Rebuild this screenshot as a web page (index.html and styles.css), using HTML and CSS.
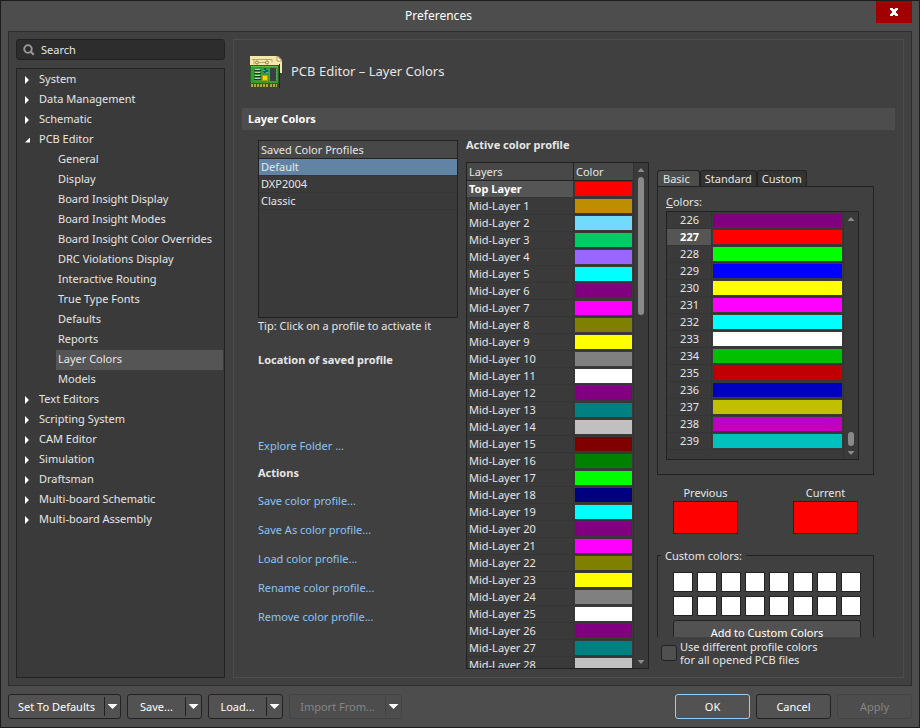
FILE: index.html
```
<!DOCTYPE html>
<html lang="en">
<head>
    <meta charset="UTF-8">
    <meta name="viewport" content="width=device-width, initial-scale=1.0">
    <title>Preferences</title>
    <link rel="stylesheet" href="styles.css">
</head>
<body>
    <div class="dialog">
        <header class="titlebar">
            <h1>Preferences</h1>
            <button type="button" class="close" aria-label="Close">
                <svg width="8" height="8" viewBox="0 0 8 8"><path d="M0 0h3v1h2V0h3v2H7v1H6v2h1v1h1v2H5V7H3v1H0V6h1V5h1V3H1V2H0z" fill="#fff"/></svg>
            </button>
        </header>

        <main class="main">
            <aside class="sidebar">
                <div class="search">
                    <svg width="12" height="12" viewBox="0 0 12 12"><circle cx="5" cy="5" r="3.8" fill="none" stroke="#999" stroke-width="1.8"/><path d="M7.8 7.8l3 3" stroke="#999" stroke-width="2"/></svg>
                    <input type="text" placeholder="Search" aria-label="Search">
                </div>
                <nav class="tree">
                    <ul>
                        <li><a href="#" class="closed">System</a></li>
                        <li><a href="#" class="closed">Data Management</a></li>
                        <li><a href="#" class="closed">Schematic</a></li>
                        <li><a href="#" class="open">PCB Editor</a>
                            <ul>
                                <li><a href="#">General</a></li>
                                <li><a href="#">Display</a></li>
                                <li><a href="#">Board Insight Display</a></li>
                                <li><a href="#">Board Insight Modes</a></li>
                                <li><a href="#">Board Insight Color Overrides</a></li>
                                <li><a href="#">DRC Violations Display</a></li>
                                <li><a href="#">Interactive Routing</a></li>
                                <li><a href="#">True Type Fonts</a></li>
                                <li><a href="#">Defaults</a></li>
                                <li><a href="#">Reports</a></li>
                                <li><a href="#" class="selected">Layer Colors</a></li>
                                <li><a href="#">Models</a></li>
                            </ul>
                        </li>
                        <li><a href="#" class="closed">Text Editors</a></li>
                        <li><a href="#" class="closed">Scripting System</a></li>
                        <li><a href="#" class="closed">CAM Editor</a></li>
                        <li><a href="#" class="closed">Simulation</a></li>
                        <li><a href="#" class="closed">Draftsman</a></li>
                        <li><a href="#" class="closed">Multi-board Schematic</a></li>
                        <li><a href="#" class="closed">Multi-board Assembly</a></li>
                    </ul>
                </nav>
            </aside>

            <section class="content">
                <div class="page-title">
                    <svg width="32" height="32" viewBox="0 0 32 32">
                        <path d="M0 0h28l4 4v13H0z" fill="#f5e6ac"/>
                        <path d="M27 0v5h5z" fill="#fffbe6" stroke="#b59b58"/>
                        <path d="M2 3.500h20v3M4 3.500v5M9 6.500h7" fill="none" stroke="#b9a468"/>
                        <circle cx="7" cy="6.500" r="1.500" fill="none" stroke="#8f7c42"/>
                        <circle cx="17" cy="6.500" r="1.500" fill="none" stroke="#8f7c42"/>
                        <path d="M0 9h30v19H0z" fill="#1d6a1d"/>
                        <path d="M1 10h27v17H1z" fill="#3a9a35"/>
                        <path d="M1 10.500h27" stroke="#62b94f"/>
                        <path d="M1 28h17v3H1zM20 28h7v3h-7z" fill="#9db32f"/>
                        <path d="M3.500 28v3M6.500 28v3M9.500 28v3M12.500 28v3M15.500 28v3M22.500 28v3M25.500 28v3" stroke="#3c5214"/>
                        <path d="M4 14.500h7M4 17.500h7M4 20.500h7M4 23.500h7" stroke="#123f1e"/>
                        <path d="M5 13.500h5M5 16.500h5M5 19.500h5M5 22.500h5" stroke="#b9d8bd"/>
                        <path d="M13 15h5M15 12v5" stroke="#135e5b" stroke-width="2"/>
                        <path d="M13 14.500h2M16 16.500h2" stroke="#45c3b0"/>
                        <path d="M12.500 19.500h5v5h-5z" fill="#f8d20c" stroke="#b89b10"/>
                        <path d="M20 12h6v13h-6z" fill="#3c3d45"/>
                        <path d="M19 14h1M19 17h1M19 20h1M19 23h1M26 14h1M26 17h1M26 20h1M26 23h1" stroke="#9da59d"/>
                        <path d="M29.500 8v24" stroke="#103710"/>
                    </svg>
                    <h2>PCB Editor – Layer Colors</h2>
                </div>
                <h3 class="section-bar">Layer Colors</h3>

                <div class="columns">
                    <div class="profiles">
                        <div class="profile-box">
                            <table>
                                <thead><tr><th>Saved Color Profiles</th></tr></thead>
                                <tbody>
                                    <tr class="active"><td>Default</td></tr>
                                    <tr><td>DXP2004</td></tr>
                                    <tr><td>Classic</td></tr>
                                </tbody>
                            </table>
                        </div>
                        <p class="tip">Tip: Click on a profile to activate it</p>
                        <h4>Location of saved profile</h4>
                        <a href="#" class="explore">Explore Folder ...</a>
                        <h4>Actions</h4>
                        <ul class="actions">
                            <li><a href="#">Save color profile...</a></li>
                            <li><a href="#">Save As color profile...</a></li>
                            <li><a href="#">Load color profile...</a></li>
                            <li><a href="#">Rename color profile...</a></li>
                            <li><a href="#">Remove color profile...</a></li>
                        </ul>
                    </div>

                    <div class="layers">
                        <h4>Active color profile</h4>
                        <div class="layer-box">
                            <div class="layer-scroll">
                                <table>
                                    <thead><tr><th>Layers</th><th>Color</th></tr></thead>
                                    <tbody id="layers"></tbody>
                                </table>
                            </div>
                            <div class="scrollbar"><i class="up"></i><i class="thumb"></i><i class="down"></i></div>
                        </div>
                    </div>

                    <div class="picker">
                        <div class="picker-view">
                            <div class="tabs" role="tablist">
                                <button type="button" role="tab" class="tab current" aria-selected="true">Basic</button>
                                <button type="button" role="tab" class="tab">Standard</button>
                                <button type="button" role="tab" class="tab">Custom</button>
                            </div>
                            <div class="tab-panel">
                                <p class="colors-label"><u>C</u>olors:</p>
                                <div class="color-box">
                                    <table>
                                        <tbody id="colors"></tbody>
                                    </table>
                                    <div class="scrollbar"><i class="up"></i><i class="thumb"></i><i class="down"></i></div>
                                </div>
                            </div>
                            <div class="compare">
                                <div>Previous<span class="sample"></span></div>
                                <div>Current<span class="sample"></span></div>
                            </div>
                            <fieldset>
                                <legend>Custom colors:</legend>
                                <div class="custom-grid" id="custom"></div>
                                <button type="button" class="btn add">Add to Custom Colors</button>
                            </fieldset>
                        </div>
                        <label class="check">
                            <input type="checkbox">
                            <span>Use different profile colors<br>for all opened PCB files</span>
                        </label>
                    </div>
                </div>
            </section>
        </main>

        <footer class="footer">
            <div class="split wide"><button type="button">Set To Defaults</button><button type="button" class="drop" aria-label="More defaults"></button></div>
            <div class="split"><button type="button">Save...</button><button type="button" class="drop" aria-label="More save options"></button></div>
            <div class="split"><button type="button">Load...</button><button type="button" class="drop" aria-label="More load options"></button></div>
            <div class="split wide off"><button type="button" disabled>Import From...</button><button type="button" class="drop" aria-label="More import options"></button></div>
            <span class="spacer"></span>
            <button type="button" class="btn primary">OK</button>
            <button type="button" class="btn">Cancel</button>
            <button type="button" class="btn" disabled>Apply</button>
        </footer>
    </div>
    <script src="script.js"></script>
</body>
</html>
```
FILE: styles.css
```
* {
    box-sizing: border-box;
}
body {
    margin: 0;
    font: 11px/17px "Noto Sans", "Open Sans", sans-serif;
    color: #e6e6e6;
    background: #4d4d4d;
}
h1, h2, h3, h4, p, ul {
    margin: 0;
    padding: 0;
}
ul {
    list-style: none;
}
button, input {
    font: inherit;
    color: inherit;
}
button {
    padding: 0;
}
table {
    border-spacing: 0;
    table-layout: fixed;
    width: 100%;
}
th, td {
    padding: 0 2px;
    line-height: 16px;
    text-align: left;
    font-weight: normal;
    white-space: nowrap;
}
th {
    height: 18px;
    border-bottom: 1px solid #222;
    background: #484848;
}
td {
    height: 17px;
    border-bottom: 1px solid #353535;
}
.dialog {
    display: flex;
    flex-direction: column;
    height: 100vh;
    border: 1px solid #1c1c1c;
    background: #4d4d4d;
}
.titlebar {
    display: grid;
    grid-template-columns: 1fr 36px;
    flex: 0 0 30px;
    padding-right: 7px;
    text-align: center;
}
.titlebar h1 {
    font-size: 12px;
    line-height: 29px;
    font-weight: normal;
    color: #fff;
}
.close {
    display: flex;
    align-items: center;
    justify-content: center;
    height: 22px;
    border: 0;
    background: #a00000;
}
.main {
    display: grid;
    grid-template-columns: 209px 1fr;
    grid-template-rows: minmax(0, 1fr);
    gap: 8px;
    flex: 1;
    min-height: 0;
    margin: 0 7px;
    padding: 7px;
    border: 1px solid #2e2e2e;
    background: #404040;
}

/* sidebar */
.sidebar {
    display: flex;
    flex-direction: column;
    gap: 8px;
}
.search {
    display: flex;
    align-items: center;
    gap: 6px;
    height: 21px;
    padding: 0 6px;
    border: 1px solid #222;
    border-radius: 3px;
    background: #2d2d2d;
}
.search input {
    flex: 1;
    min-width: 0;
    height: 17px;
    padding: 0 0 1px;
    border: 0;
    outline: 0;
    background: none;
}
.search input::placeholder {
    color: #e6e6e6;
}
.tree {
    flex: 1;
    padding: 1px;
    border: 1px solid #222;
    background: #3a3a3a;
}
.tree a {
    display: flex;
    align-items: center;
    height: 20px;
    line-height: 18px;
    padding-bottom: 2px;
    color: inherit;
    text-decoration: none;
}
.tree a::before {
    content: "";
    width: 7px;
    margin: 2px 7px 0;
}
.tree a.closed::before {
    height: 8px;
    background: #fff;
    clip-path: polygon(0 0, 4px 50%, 0 100%);
}
.tree a.open::before {
    height: 5px;
    background: #fff;
    clip-path: polygon(5px 0, 5px 100%, 0 100%);
}
.tree ul ul {
    padding-left: 38px;
}
.tree ul ul a {
    padding-left: 2px;
}
.tree ul ul a::before {
    display: none;
}
.tree .selected {
    background: #555;
}

/* content page */
.content {
    display: flex;
    flex-direction: column;
    min-width: 0;
    padding: 0 8px 8px;
    border: 1px solid #4d4d4d;
}
.page-title {
    display: flex;
    align-items: center;
    gap: 9px;
    height: 68px;
    padding: 0 8px;
    margin-top: -2px;
}
.page-title h2 {
    padding-bottom: 2px;
    font-size: 13px;
    font-weight: normal;
}
.section-bar {
    height: 22px;
    padding: 0 6px;
    margin-top: 2px;
    font-size: 11px;
    line-height: 22px;
    color: #fff;
    background: #4d4d4d;
}
.columns {
    display: grid;
    grid-template-columns: minmax(200px, 1fr) 183px 217px;
    grid-template-rows: minmax(0, 1fr);
    gap: 8px;
    flex: 1;
    min-height: 0;
    padding: 0 21px 0 16px;
}
h4 {
    font-size: 11px;
}
.profiles {
    padding-top: 10px;
}
.profile-box {
    height: 178px;
    border: 1px solid #222;
    background: #3a3a3a;
}
.profiles .active {
    background: #6284a4;
}
.tip {
    margin-bottom: 18px;
    line-height: 15px;
}
.profiles a {
    color: #8cc4f5;
    text-decoration: none;
}
.explore {
    display: block;
    margin: 69px 0 10px;
}
.actions {
    display: grid;
    gap: 12px;
    padding-top: 11px;
}

/* layer list */
.layers {
    display: flex;
    flex-direction: column;
    min-height: 0;
    padding-top: 6px;
}
.layers h4 {
    flex: 0 0 26px;
}
.layer-box {
    display: flex;
    flex: 1;
    min-height: 0;
    border: 1px solid #222;
    background: #3a3a3a;
}
.layer-scroll {
    flex: 1;
    overflow: hidden;
}
.layers th:last-child, .layers td:last-child {
    width: 60px;
}
.layers th:last-child {
    border-left: 1px solid #222;
}
tr.on td:first-child {
    color: #fff;
    font-weight: bold;
    background: #555;
}
td.swatch-cell {
    padding: 0 1px;
    border-left: 1px solid #353535;
}
.swatch {
    display: block;
    height: 14px;
}
.scrollbar {
    display: flex;
    flex-direction: column;
    align-items: center;
    flex: 0 0 15px;
    padding: 5px 0 4px;
    border-left: 1px solid #333;
}
.up, .down {
    width: 7px;
    height: 4px;
    background: #8a8a8a;
}
.up {
    clip-path: polygon(50% 0, 100% 100%, 0 100%);
}
.down {
    clip-path: polygon(0 0, 100% 0, 50% 100%);
}
.thumb {
    width: 6px;
    border-radius: 3px;
    background: #8a8a8a;
}
.layers .thumb {
    height: 138px;
    margin: 5px 0 auto;
}

/* colour picker */
.picker {
    display: flex;
    flex-direction: column;
    min-height: 0;
    padding-top: 40px;
}
.picker-view {
    flex: 1;
    min-height: 0;
    overflow: hidden;
}
.tabs {
    display: flex;
    height: 16px;
}
.tab {
    padding: 0 4px;
    border: 1px solid #222;
    border-bottom: 0;
    border-radius: 3px 3px 0 0;
    line-height: 13px;
    background: #333;
}
.tab.current {
    padding: 0 9px 0 5px;
    background: #4d4d4d;
}
.tab-panel {
    padding: 6px 14px 14px 8px;
    border: 1px solid #222;
}
.colors-label {
    margin-bottom: 1px;
}
.color-box {
    display: flex;
    align-items: flex-start;
    height: 249px;
    border: 1px solid #222;
    background: #3a3a3a;
}
.color-box table {
    flex: 1;
    width: auto;
}
.color-box td:first-child {
    width: 44px;
    padding-right: 12px;
    text-align: right;
}
.color-box .scrollbar {
    align-self: stretch;
}
.color-box .thumb {
    height: 14px;
    margin: auto 0 5px;
}
.compare {
    display: flex;
    justify-content: space-between;
    padding: 9px 16px 0;
    text-align: center;
}
.sample {
    display: block;
    width: 65px;
    height: 33px;
    border: 1px solid #222;
    background: #f00;
}
fieldset {
    margin: 13px 0 0;
    padding: 8px 12px 8px 15px;
    border: 1px solid #222;
}
legend {
    margin-left: -12px;
    padding: 0 4px;
}
.custom-grid {
    display: grid;
    grid-template-columns: repeat(8, 20px);
    gap: 4px;
}
.custom-grid button {
    height: 20px;
    border: 1px solid #222;
    background: #fff;
}
.check {
    display: flex;
    align-items: center;
    gap: 3px;
    padding: 3px 0 3px 4px;
    line-height: 13px;
}
.check input {
    appearance: none;
    width: 16px;
    height: 16px;
    margin: 0;
    border: 1px solid #222;
    border-radius: 3px;
    background: #505050;
}

/* buttons */
.btn, .split {
    width: 75px;
    height: 25px;
    border: 1px solid #222;
    border-radius: 3px;
    color: #fff;
    background: #525252;
}
.btn:disabled, .off {
    border-color: #444;
    color: #858585;
    background: #4d4d4d;
}
.primary {
    border-color: #9ccbf7;
}
.add {
    width: 188px;
    margin-top: 4px;
}
.footer {
    display: flex;
    gap: 6px;
    padding: 8px 7px;
}
.spacer {
    flex: 1;
}
.split {
    display: flex;
}
.split.wide {
    width: 113px;
}
.split button {
    flex: 1;
    border: 0;
    background: none;
}
.split .drop {
    flex: 0 0 16px;
    margin: 2px 0;
    border-left: 1px solid #222;
}
.off .drop {
    border-color: #444;
}
.drop::before {
    content: "";
    display: block;
    width: 10px;
    height: 5px;
    margin: 0 auto;
    background: #fff;
    clip-path: polygon(0 0, 100% 0, 50% 100%);
}
```
FILE: script.js
```
var layerColors = ['#ff0000', '#bc8e00', '#70dbfa', '#00cc66', '#9966ff', '#00ffff', '#800080', '#ff00ff',
    '#808000', '#ffff00', '#808080', '#ffffff', '#800080', '#008080', '#c0c0c0', '#800000',
    '#008000', '#00ff00', '#000080', '#00ffff', '#800080', '#ff00ff', '#808000', '#ffff00',
    '#808080', '#ffffff', '#800080', '#008080', '#c0c0c0'];
var basicColors = ['#800080', '#ff0000', '#00ff00', '#0000ff', '#ffff00', '#ff00ff', '#00ffff',
    '#ffffff', '#00c000', '#c00000', '#0000c0', '#c0c000', '#c000c0', '#00c0c0'];

function row(name, color, on) {
    return '<tr' + (on ? ' class="on"' : '') + '><td>' + name + '</td>' +
        '<td class="swatch-cell"><span class="swatch" style="background:' + color + '"></span></td></tr>';
}

document.getElementById('layers').innerHTML = layerColors.map(function (color, i) {
    return row(i === 0 ? 'Top Layer' : 'Mid-Layer ' + i, color, i === 0);
}).join('');

document.getElementById('colors').innerHTML = basicColors.map(function (color, i) {
    return row(226 + i, color, i === 1);
}).join('');

var custom = document.getElementById('custom');
for (var i = 1; i <= 16; i++) {
    custom.innerHTML += '<button type="button" aria-label="Custom color ' + i + '"></button>';
}
```
